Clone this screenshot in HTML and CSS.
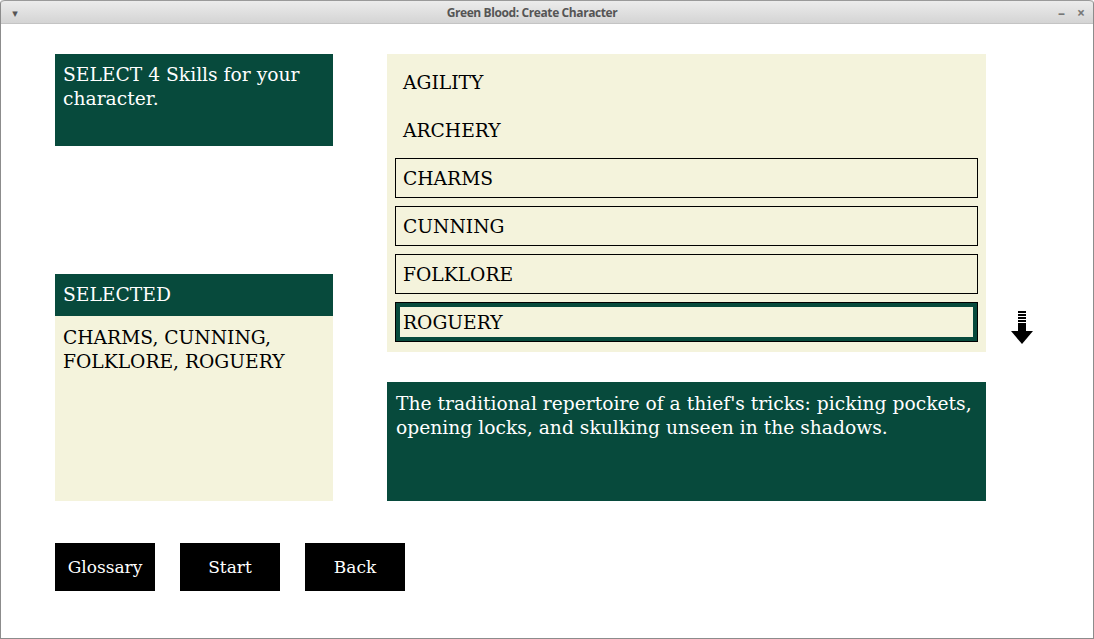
FILE: index.html
```html
<!DOCTYPE html>
<html>
<head>
<meta charset="utf-8">
<link rel="stylesheet" href="styles.css">
</head>
<body>
<div class="window">
  <div class="titlebar">
    <span class="tb-menu">▾</span>
    <span class="tb-title">Green Blood: Create Character</span>
    <span class="tb-ctrls"><span class="tb-min">–</span><span class="tb-close">×</span></span>
  </div>
  <div class="content">
    <div class="main">
      <div class="left">
        <div class="prompt">SELECT 4 Skills for your character.</div>
        <div class="selected">
          <div class="sel-head">SELECTED</div>
          <div class="sel-body">CHARMS, CUNNING, FOLKLORE, ROGUERY</div>
        </div>
      </div>
      <div class="right">
        <div class="list-row">
          <div class="list">
            <div class="item">AGILITY</div>
            <div class="item">ARCHERY</div>
            <div class="item boxed">CHARMS</div>
            <div class="item boxed">CUNNING</div>
            <div class="item boxed">FOLKLORE</div>
            <div class="item boxed focus">ROGUERY</div>
          </div>
          <svg class="arrow" width="22" height="33" viewBox="0 0 22 33">
            <rect x="7" y="0" width="8" height="2" fill="#000"/>
            <rect x="7" y="3" width="8" height="2" fill="#000"/>
            <rect x="7" y="6" width="8" height="2" fill="#000"/>
            <rect x="7" y="9" width="8" height="2" fill="#000"/>
            <rect x="7" y="12" width="8" height="9" fill="#000"/>
            <polygon points="0,20 22,20 11,33" fill="#000"/>
          </svg>
        </div>
        <div class="desc">The traditional repertoire of a thief's tricks: picking pockets, opening locks, and skulking unseen in the shadows.</div>
      </div>
    </div>
    <div class="buttons">
      <div class="btn">Glossary</div>
      <div class="btn">Start</div>
      <div class="btn">Back</div>
    </div>
  </div>
</div>
</body>
</html>
```
FILE: styles.css
```css
html, body { margin: 0; padding: 0; }
body { width: 1094px; height: 639px; background: #fff; overflow: hidden; }
.window {
  width: 1094px; height: 639px; box-sizing: border-box;
  border: 1px solid #8c8c8c; border-top: none; border-radius: 4px 4px 0 0;
  display: flex; flex-direction: column; background: #fff;
}
.titlebar {
  height: 24px; flex: none; box-sizing: border-box;
  background: linear-gradient(#ececec, #d4d4d4);
  border-bottom: 1px solid #c4c4c4; border-top: 1px solid #9a9a9a;
  border-radius: 4px 4px 0 0;
  display: flex; align-items: center;
  font-family: "Open Sans", "DejaVu Sans", sans-serif; font-size: 12px; font-weight: 700;
  color: #555;
}
.tb-menu { width: 28px; text-align: center; font-size: 11px; color: #555; }
.tb-title { flex: 1; text-align: center; letter-spacing: -0.4px; }
.tb-ctrls { width: 50px; display: flex; justify-content: flex-end; gap: 12px; padding-right: 8px; color: #777; font-size: 14px; }
.content { flex: 1; padding: 30px 0 0 54px; font-family: "DejaVu Serif", serif; }
.main { display: flex; gap: 54px; }
.left { width: 278px; display: flex; flex-direction: column; }
.prompt {
  background: #074a3c; color: #fff; height: 92px; box-sizing: border-box;
  padding: 9px 8px; font-size: 18.7px; line-height: 24px;
}
.selected { margin-top: 128px; }
.sel-head { background: #074a3c; color: #fff; height: 42px; box-sizing: border-box; padding: 9px 8px; font-size: 18.7px; line-height: 24px; }
.sel-body { background: #f4f3dc; color: #000; height: 185px; box-sizing: border-box; padding: 10px 8px; font-size: 18.7px; line-height: 24px; }
.right { display: flex; flex-direction: column; }
.list-row { display: flex; align-items: flex-end; }
.list {
  width: 599px; height: 298px; box-sizing: border-box; background: #f4f3dc;
  padding: 8px 8px 10px 8px; display: flex; flex-direction: column; gap: 8px;
}
.item { height: 40px; box-sizing: border-box; padding: 0 8px; display: flex; align-items: center; font-size: 18.7px; color: #000; }
.boxed { border: 1px solid #000; padding-left: 7px; }
.focus { box-shadow: inset 0 0 0 4px #074a3c; }
.arrow { margin: 0 0 8px 25px; }
.desc {
  margin-top: 30px; width: 599px; height: 119px; box-sizing: border-box;
  background: #074a3c; color: #fff; padding: 10px 9px; font-size: 18.7px; line-height: 24px;
}
.buttons { display: flex; gap: 25px; margin-top: 42px; }
.btn {
  width: 100px; height: 48px; background: #000; color: #fff;
  display: flex; align-items: center; justify-content: center; font-size: 17px;
}
```
